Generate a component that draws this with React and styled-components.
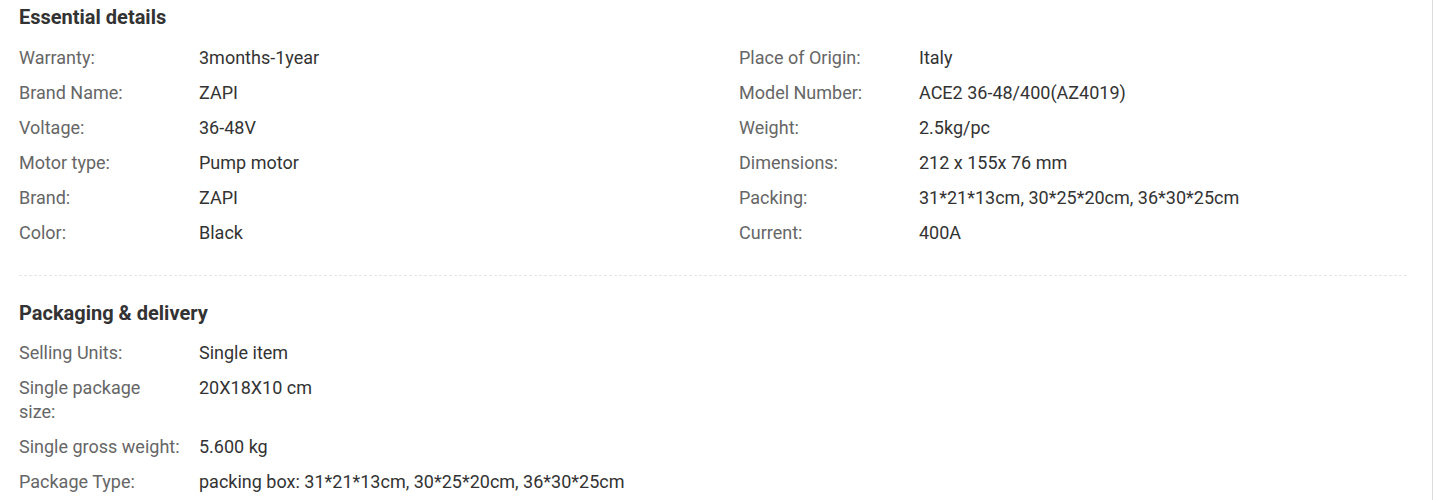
import React from "react";
import styled, { createGlobalStyle } from "styled-components";

const Global = createGlobalStyle`
  html, body { margin: 0; padding: 0; background: #fff; }
  body { font-family: Roboto, "Liberation Sans", Arial, sans-serif; }
`;

const Page = styled.div`
  width: 1432px;
  min-height: 500px;
  border-right: 1px solid #dcdcdc;
  box-sizing: content-box;
`;

const Content = styled.div`
  padding: 5px 25px 0 19px;
`;

const Section = styled.section`
  padding-bottom: ${(p) => (p.$last ? "0" : "25px")};
  border-bottom: ${(p) => (p.$last ? "none" : "1px dashed #e6e6e6")};
  margin-bottom: ${(p) => (p.$last ? "0" : "24.5px")};
`;

const Title = styled.h3`
  margin: 0 0 11px;
  font-size: 20px;
  line-height: 24px;
  font-weight: 700;
  color: #333;
`;

const Grid = styled.div`
  display: grid;
  grid-template-columns: 720px 1fr;
`;

const Row = styled.div`
  display: flex;
  padding: 5.5px 0;
  font-size: 18px;
  line-height: 24px;
`;

const Label = styled.div`
  width: 161.5px;
  flex: 0 0 161.5px;
  margin-right: 18.5px;
  color: #666;
`;

const Value = styled.div`
  color: #333;
`;

const essential = [
  ["Warranty:", "3months-1year"],
  ["Place of Origin:", "Italy"],
  ["Brand Name:", "ZAPI"],
  ["Model Number:", "ACE2 36-48/400(AZ4019)"],
  ["Voltage:", "36-48V"],
  ["Weight:", "2.5kg/pc"],
  ["Motor type:", "Pump motor"],
  ["Dimensions:", "212 x 155x 76 mm"],
  ["Brand:", "ZAPI"],
  ["Packing:", "31*21*13cm, 30*25*20cm, 36*30*25cm"],
  ["Color:", "Black"],
  ["Current:", "400A"],
];

const packaging = [
  ["Selling Units:", "Single item"],
  ["Single package size:", "20X18X10 cm"],
  ["Single gross weight:", "5.600 kg"],
  ["Package Type:", "packing box: 31*21*13cm, 30*25*20cm, 36*30*25cm"],
];

export default function App() {
  return (
    <Page>
      <Global />
      <Content>
        <Section>
          <Title>Essential details</Title>
          <Grid>
            {essential.map(([l, v]) => (
              <Row key={l}>
                <Label>{l}</Label>
                <Value>{v}</Value>
              </Row>
            ))}
          </Grid>
        </Section>
        <Section $last>
          <Title>Packaging &amp; delivery</Title>
          {packaging.map(([l, v]) => (
            <Row key={l}>
              <Label>{l}</Label>
              <Value>{v}</Value>
            </Row>
          ))}
        </Section>
      </Content>
    </Page>
  );
}
